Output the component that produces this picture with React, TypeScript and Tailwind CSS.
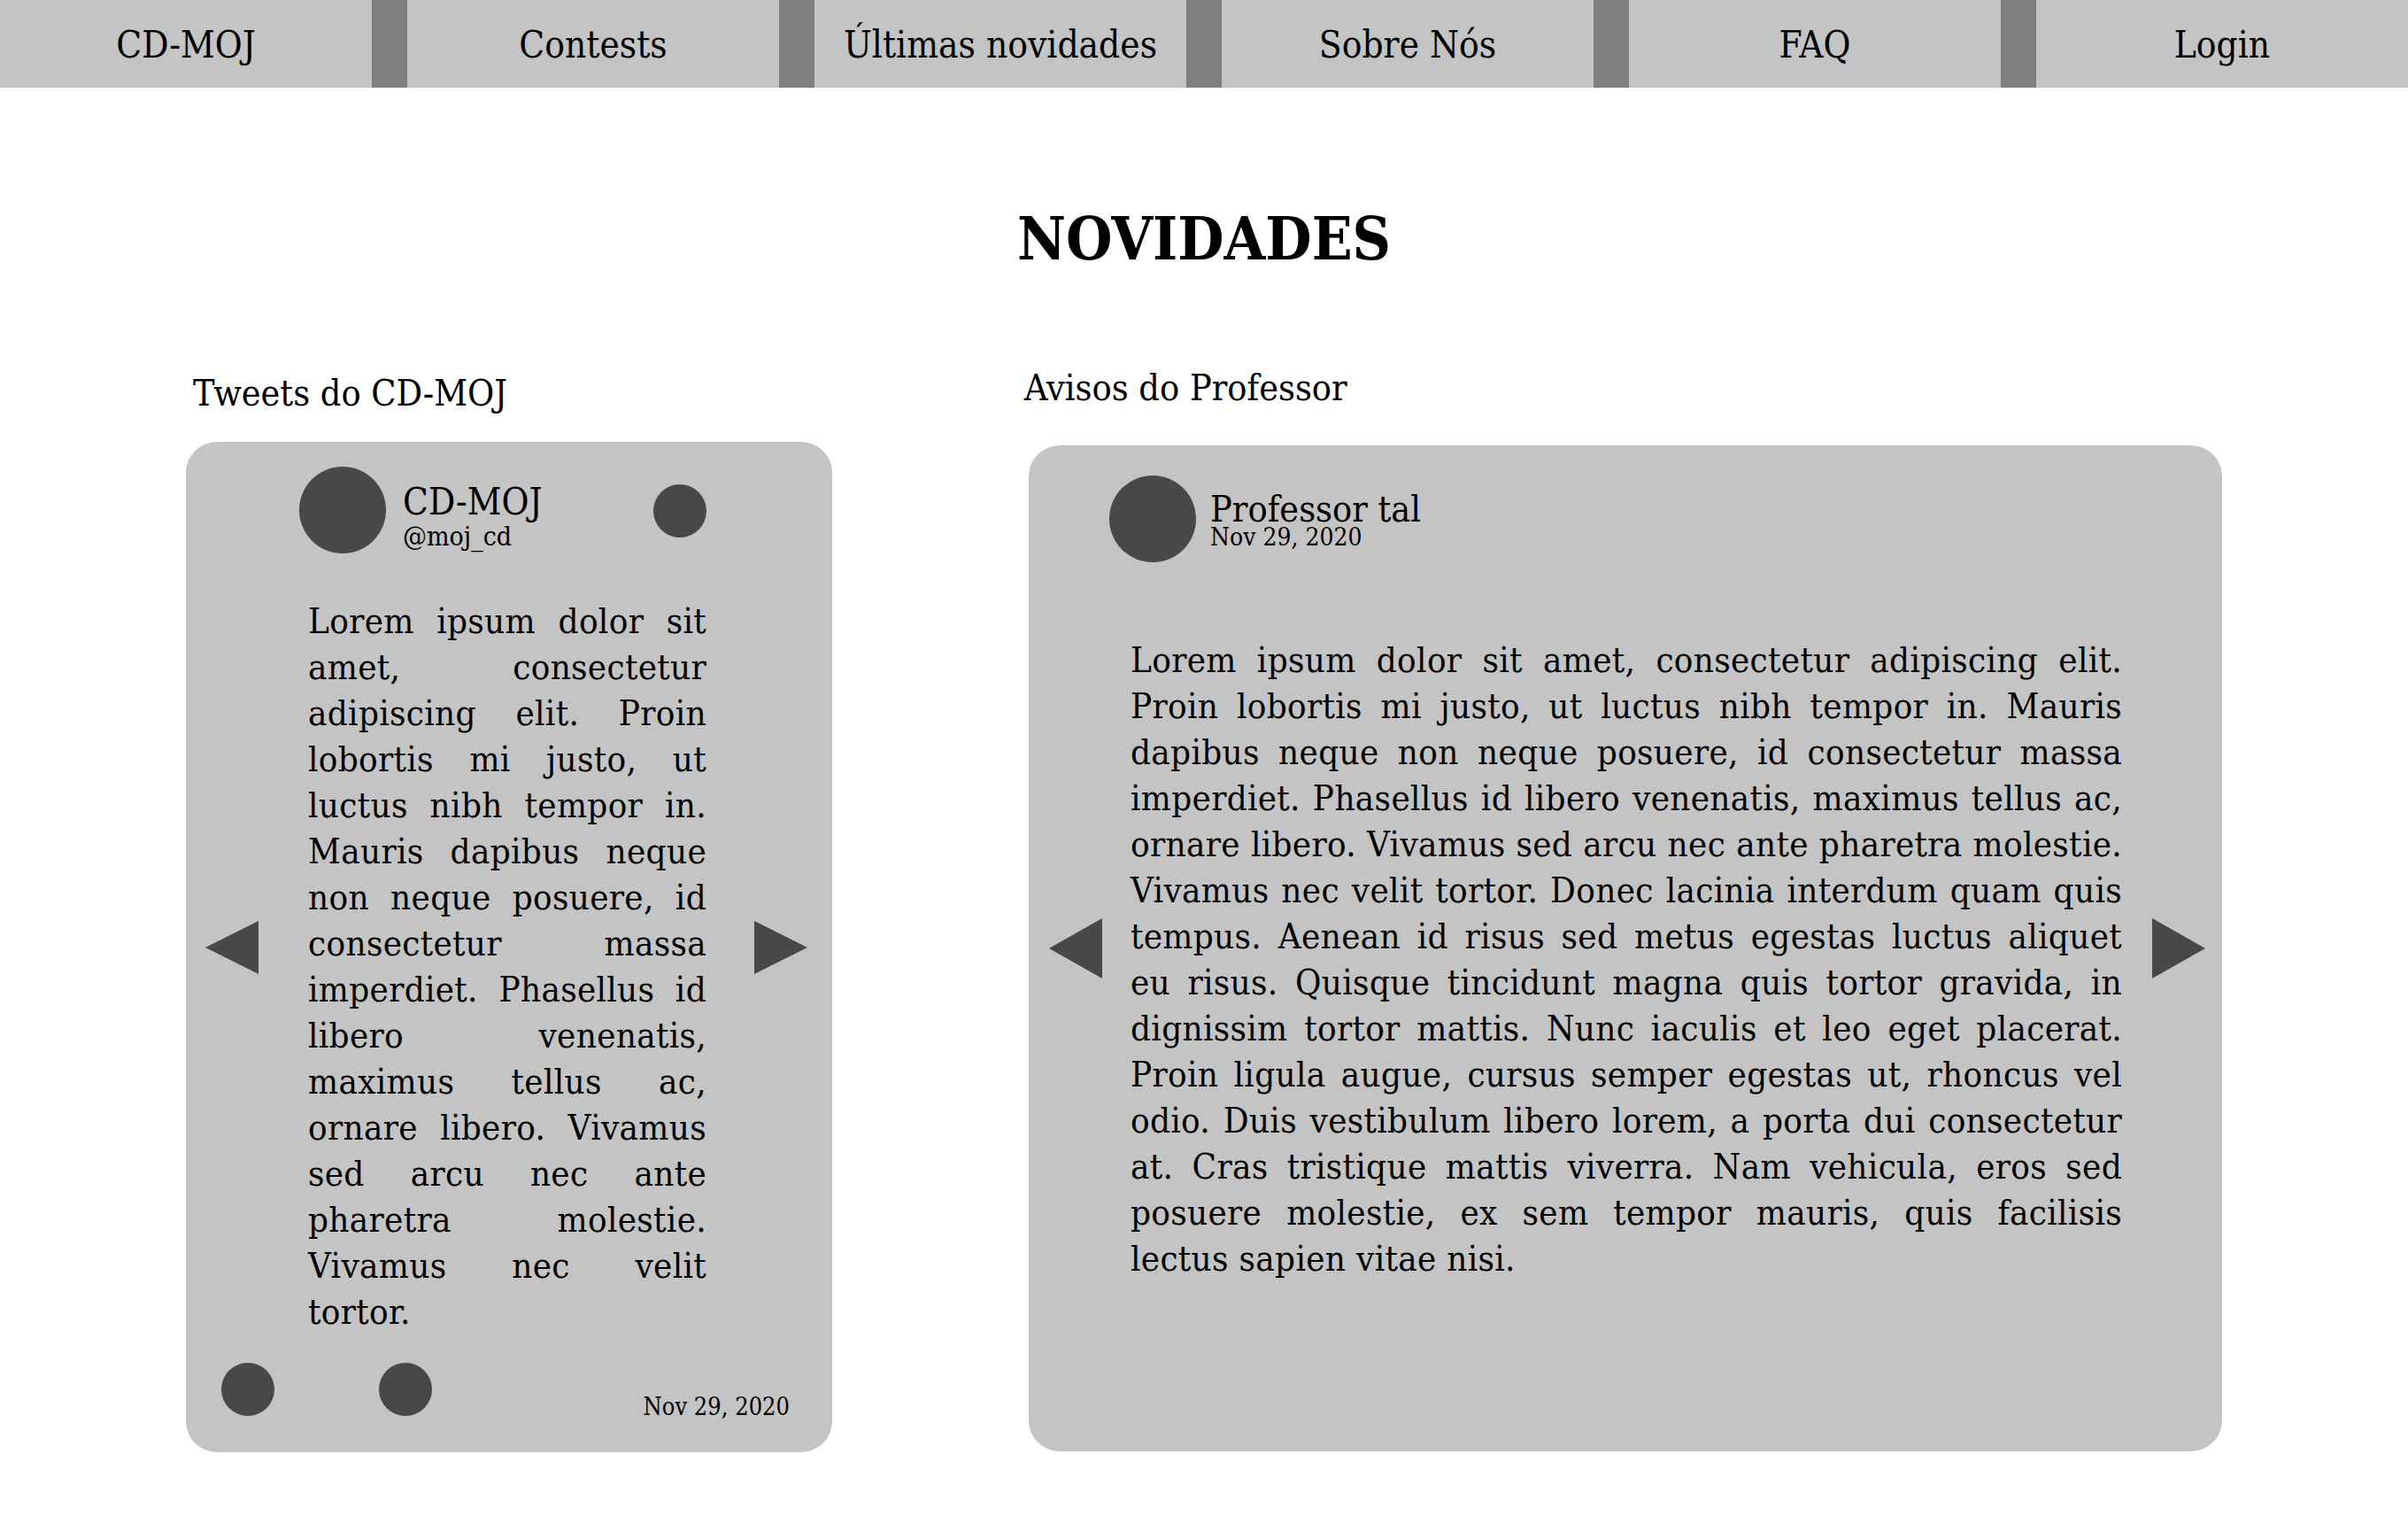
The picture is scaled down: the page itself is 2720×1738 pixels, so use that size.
const navItems = ['CD-MOJ', 'Contests', 'Últimas novidades', 'Sobre Nós', 'FAQ', 'Login'];

const tweetText =
  'Lorem ipsum dolor sit amet, consectetur adipiscing elit. Proin lobortis mi justo, ut luctus nibh tempor in. Mauris dapibus neque non neque posuere, id consectetur massa imperdiet. Phasellus id libero venenatis, maximus tellus ac, ornare libero. Vivamus sed arcu nec ante pharetra molestie. Vivamus nec velit tortor.';

const noticeText =
  'Lorem ipsum dolor sit amet, consectetur adipiscing elit. Proin lobortis mi justo, ut luctus nibh tempor in. Mauris dapibus neque non neque posuere, id consectetur massa imperdiet. Phasellus id libero venenatis, maximus tellus ac, ornare libero. Vivamus sed arcu nec ante pharetra molestie. Vivamus nec velit tortor. Donec lacinia interdum quam quis tempus. Aenean id risus sed metus egestas luctus aliquet eu risus. Quisque tincidunt magna quis tortor gravida, in dignissim tortor mattis. Nunc iaculis et leo eget placerat. Proin ligula augue, cursus semper egestas ut, rhoncus vel odio. Duis vestibulum libero lorem, a porta dui consectetur at. Cras tristique mattis viverra. Nam vehicula, eros sed posuere molestie, ex sem tempor mauris, quis facilisis lectus sapien vitae nisi.';

function Arrow({ dir, className }: { dir: 'left' | 'right'; className: string }) {
  return (
    <button className={className}>
      <svg viewBox="0 0 60 60" className="h-full w-full" preserveAspectRatio="none">
        <polygon points={dir === 'left' ? '60,0 0,30 60,60' : '0,0 60,30 0,60'} fill="#4a4748" />
      </svg>
    </button>
  );
}

function Navbar() {
  return (
    <nav className="flex h-[99px] gap-[40px] bg-[#808080]">
      {navItems.map((item) => (
        <a key={item} className="flex flex-1 items-center justify-center bg-[#c4c4c4] pt-[2px] text-[42px] text-black">
          {item}
        </a>
      ))}
    </nav>
  );
}

function TweetCard() {
  return (
    <div className="relative flex h-[1141px] flex-col rounded-[35px] bg-[#c4c4c4]">
      <Arrow dir="left" className="absolute left-[22px] top-1/2 h-[60px] w-[60px] -translate-y-1/2" />
      <Arrow dir="right" className="absolute right-[28px] top-1/2 h-[60px] w-[60px] -translate-y-1/2" />

      <div className="flex items-start pl-[128px] pt-[28px]">
        <div className="h-[98px] w-[98px] rounded-full bg-[#4a4748]" />
        <div className="ml-[19px] mt-[18px] flex w-[283px] flex-col">
          <span className="text-[42px] leading-[44px]">CD-MOJ</span>
          <span className="text-[30px] leading-[34px]">@moj_cd</span>
        </div>
        <div className="mt-[20px] h-[60px] w-[60px] rounded-full bg-[#4a4748]" />
      </div>

      <p className="ml-[138px] mt-[50px] w-[450px] text-justify text-[40px] leading-[52px] tracking-[0.3px]">
        {tweetText}
      </p>

      <div className="mt-auto flex items-start pb-[34px] pl-[40px] pr-[48px]">
        <div className="h-[60px] w-[60px] rounded-full bg-[#4a4748]" />
        <div className="ml-[118px] h-[60px] w-[60px] rounded-full bg-[#4a4748]" />
        <span className="ml-auto mt-[33px] text-[27px] leading-[34px]">Nov 29, 2020</span>
      </div>
    </div>
  );
}

function NoticeCard() {
  return (
    <div className="relative flex h-[1136px] flex-col rounded-[35px] bg-[#c4c4c4]">
      <Arrow dir="left" className="absolute left-[23px] top-1/2 h-[68px] w-[60px] -translate-y-1/2" />
      <Arrow dir="right" className="absolute right-[19px] top-1/2 h-[68px] w-[60px] -translate-y-1/2" />

      <div className="flex items-start pl-[91px] pt-[34px]">
        <div className="h-[98px] w-[98px] rounded-full bg-[#4a4748]" />
        <div className="ml-[16px] mt-[20px] flex flex-col">
          <span className="text-[41px] leading-[36px]">Professor tal</span>
          <span className="text-[28px] leading-[28px]">Nov 29, 2020</span>
        </div>
      </div>

      <p className="ml-[115px] mt-[84px] w-[1120px] text-justify text-[40px] leading-[52px] tracking-[0.3px]">
        {noticeText}
      </p>
    </div>
  );
}

export default function App() {
  return (
    <div className="min-h-screen bg-white pb-[99px] font-['DejaVu_Serif_Condensed','DejaVu_Serif',serif] text-black">
      <Navbar />

      <h1 className="mt-[129px] text-center text-[67px] font-bold leading-[84px]">NOVIDADES</h1>

      <main className="mt-[102px] flex gap-[222px] px-[210px]">
        <section className="flex w-[730px] flex-col">
          <h2 className="mt-[6px] pl-[8px] text-[41px] leading-[48px]">Tweets do CD-MOJ</h2>
          <div className="mt-[31px]">
            <TweetCard />
          </div>
        </section>

        <section className="flex flex-1 flex-col">
          <h2 className="ml-[-5px] text-[41px] leading-[48px]">Avisos do Professor</h2>
          <div className="mt-[41px]">
            <NoticeCard />
          </div>
        </section>
      </main>
    </div>
  );
}
